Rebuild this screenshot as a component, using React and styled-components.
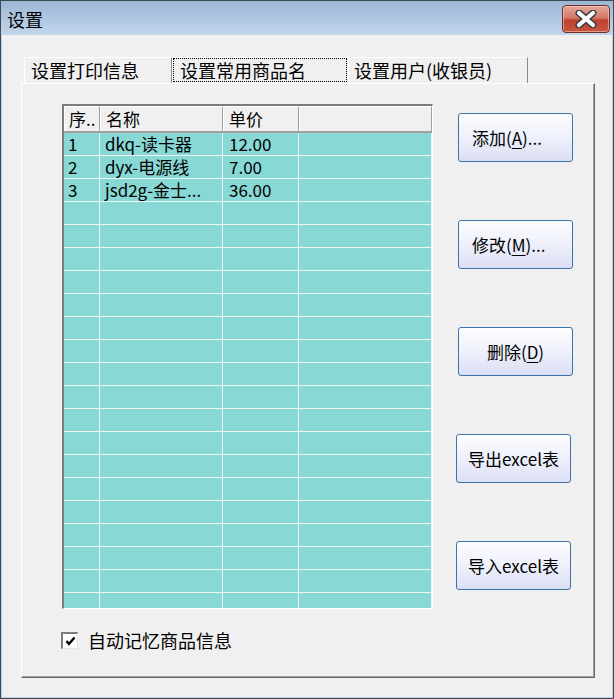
import styled, { createGlobalStyle } from "styled-components"

const Global = createGlobalStyle`
    html, body {
        margin: 0;
        padding: 0;
        background: #f0f0f0;
    }
    * {
        box-sizing: border-box;
    }
`

const FONT = `"Noto Sans CJK SC", "Noto Sans", sans-serif`

const Ventana = styled.div`
    width: 614px;
    height: 699px;
    display: flex;
    flex-direction: column;
    border: 1px solid #3f4a57;
    background: #b6d0ea;
    font-family: ${FONT};
    color: #000;
`

const BarraTitulo = styled.div`
    height: 34px;
    display: flex;
    justify-content: space-between;
    align-items: flex-start;
    padding: 0 3px 0 6px;
    background: linear-gradient(#9cb7d5, #c2d6ec);
`

const Titulo = styled.span`
    font-size: 18px;
    line-height: 36px;
`

const BotonCerrar = styled.div`
    width: 48px;
    height: 28px;
    margin-top: 4px;
    border: 1px solid #6e3029;
    border-radius: 4px;
    background: linear-gradient(#e6a89c 0%, #d47866 45%, #bf4131 55%, #c9553f 100%);
    box-shadow: inset 0 0 0 1px rgba(255, 220, 210, 0.5);
    display: flex;
    justify-content: center;
    align-items: center;
`

const Cuerpo = styled.div`
    flex: 1;
    margin: 0 1px 1px 1px;
    background: #f0f0f0;
    padding: 22px 0 0 19px;
    display: flex;
    flex-direction: column;
`

const Pestanas = styled.div`
    display: flex;
    padding-left: 3px;
    height: 26px;
`

const Pestana = styled.div`
    width: ${props => props.$ancho}px;
    height: 26px;
    border-top: 1px solid #fff;
    border-left: 1px solid #fff;
    border-right: 1px solid ${props => props.$active ? "transparent" : "#8a8a8a"};
    font-size: 18px;
    line-height: 24px;
    padding-left: ${props => props.$pad}px;
    white-space: nowrap;
    ${props => props.$active && `
        outline: 1px dotted #000;
        outline-offset: -2px;
    `}
`

const Pagina = styled.div`
    width: 574px;
    height: 595px;
    border-top: 1px solid #fff;
    border-left: 1px solid #fff;
    border-right: 1px solid #696969;
    border-bottom: 1px solid #696969;
    box-shadow: inset -1px -1px 0 #a0a0a0;
    padding: 20px 0 0 40px;
    display: flex;
    flex-direction: column;
`

const Fila = styled.div`
    display: flex;
    align-items: flex-start;
`

const Tabla = styled.div`
    width: 371px;
    height: 505px;
    overflow: hidden;
    border-style: solid;
    border-width: 2px 1px 1px 2px;
    border-color: #7c7c7c #fff #fff #7c7c7c;
    background: #88d8d6;
`

const FilaCabecera = styled.div`
    display: grid;
    grid-template-columns: 36px 123px 76px 1fr;
    height: 27px;
    background: #f0f0f0;
    border-bottom: 2px solid #a0a0a0;
`

const Cabecera = styled.div`
    font-size: 17px;
    line-height: 24px;
    padding-left: ${props => props.$pad || 5}px;
    border-top: 1px solid #fff;
    border-right: 1px solid #a0a0a0;
    box-shadow: inset 1px 0 0 #fff;
    white-space: nowrap;
`

const FilaDatos = styled.div`
    display: grid;
    grid-template-columns: 36px 123px 76px 1fr;
    height: 23px;
    border-bottom: 1px solid #eef4f4;
`

const Celda = styled.div`
    font-size: 17px;
    line-height: 22px;
    padding-left: ${props => props.$pad || 5}px;
    border-right: 1px solid #eef4f4;
    white-space: nowrap;
`

const ColumnaBotones = styled.div`
    display: flex;
    flex-direction: column;
    gap: 58px;
    margin-left: 23px;
    padding-top: 9px;
`

const Boton = styled.button`
    width: 115px;
    height: 49px;
    margin-left: ${props => props.$dx || 0}px;
    border: 1px solid #3a74aa;
    border-radius: 3px;
    background: linear-gradient(#fdfdfe 0%, #eef0fb 50%, #dcdff4 100%);
    font-family: ${FONT};
    font-size: 17px;
    color: #000;
    display: flex;
    align-items: center;
    justify-content: ${props => props.$izq ? "flex-start" : "center"};
    padding: 0 0 0 ${props => props.$izq ? 13 : 0}px;
    white-space: nowrap;
    cursor: pointer;

    u {
        text-decoration: underline;
        text-underline-offset: 3px;
    }
`

const FilaCheck = styled.label`
    display: flex;
    align-items: center;
    gap: 10px;
    height: 18px;
    line-height: 18px;
    margin-top: 22px;
    margin-left: -1px;
    font-size: 18px;
`

const Casilla = styled.span`
    width: 17px;
    height: 17px;
    background: #fff;
    border-style: solid;
    border-width: 2px 1px 1px 2px;
    border-color: #7c7c7c #e4e4e4 #e4e4e4 #7c7c7c;
    display: flex;
    justify-content: center;
    align-items: center;
`

const datos = [
    ["1", "dkq-读卡器", "12.00"],
    ["2", "dyx-电源线", "7.00"],
    ["3", "jsd2g-金士...", "36.00"],
]

const filas = Array.from({ length: 21 }, (_, i) => datos[i] || ["", "", ""])

const App = () => {
    return (
        <>
            <Global />
            <Ventana>
                <BarraTitulo>
                    <Titulo>设置</Titulo>
                    <BotonCerrar>
                        <svg width="22" height="18" viewBox="0 0 22 18">
                            <path d="M4 3 L18 15 M18 3 L4 15" stroke="#3b3f4a" strokeWidth="7" strokeLinecap="round" />
                            <path d="M4 3 L18 15 M18 3 L4 15" stroke="#fff" strokeWidth="4.2" strokeLinecap="round" />
                        </svg>
                    </BotonCerrar>
                </BarraTitulo>
                <Cuerpo>
                    <Pestanas>
                        <Pestana $ancho={148} $pad={6}>设置打印信息</Pestana>
                        <Pestana $ancho={176} $pad={7} $active>设置常用商品名</Pestana>
                        <Pestana $ancho={180} $pad={5}>设置用户(收银员)</Pestana>
                    </Pestanas>
                    <Pagina>
                        <Fila>
                            <Tabla>
                                <FilaCabecera>
                                    <Cabecera $pad={5}>序..</Cabecera>
                                    <Cabecera $pad={6}>名称</Cabecera>
                                    <Cabecera $pad={6}>单价</Cabecera>
                                    <Cabecera />
                                </FilaCabecera>
                                {filas.map((f, i) => (
                                    <FilaDatos key={i}>
                                        <Celda $pad={4}>{f[0]}</Celda>
                                        <Celda $pad={5}>{f[1]}</Celda>
                                        <Celda $pad={6}>{f[2]}</Celda>
                                        <Celda />
                                    </FilaDatos>
                                ))}
                            </Tabla>
                            <ColumnaBotones>
                                <Boton $izq $dx={2}>添加(<u>A</u>)...</Boton>
                                <Boton $izq $dx={2}>修改(<u>M</u>)...</Boton>
                                <Boton $dx={2}>删除(<u>D</u>)</Boton>
                                <Boton>导出excel表</Boton>
                                <Boton>导入excel表</Boton>
                            </ColumnaBotones>
                        </Fila>
                        <FilaCheck>
                            <Casilla>
                                <svg width="11" height="10" viewBox="0 0 11 10">
                                    <path d="M1.5 5 L4 8 L9.5 1.5" stroke="#000" strokeWidth="2.4" fill="none" />
                                </svg>
                            </Casilla>
                            自动记忆商品信息
                        </FilaCheck>
                    </Pagina>
                </Cuerpo>
            </Ventana>
        </>
    )
}

export default App
